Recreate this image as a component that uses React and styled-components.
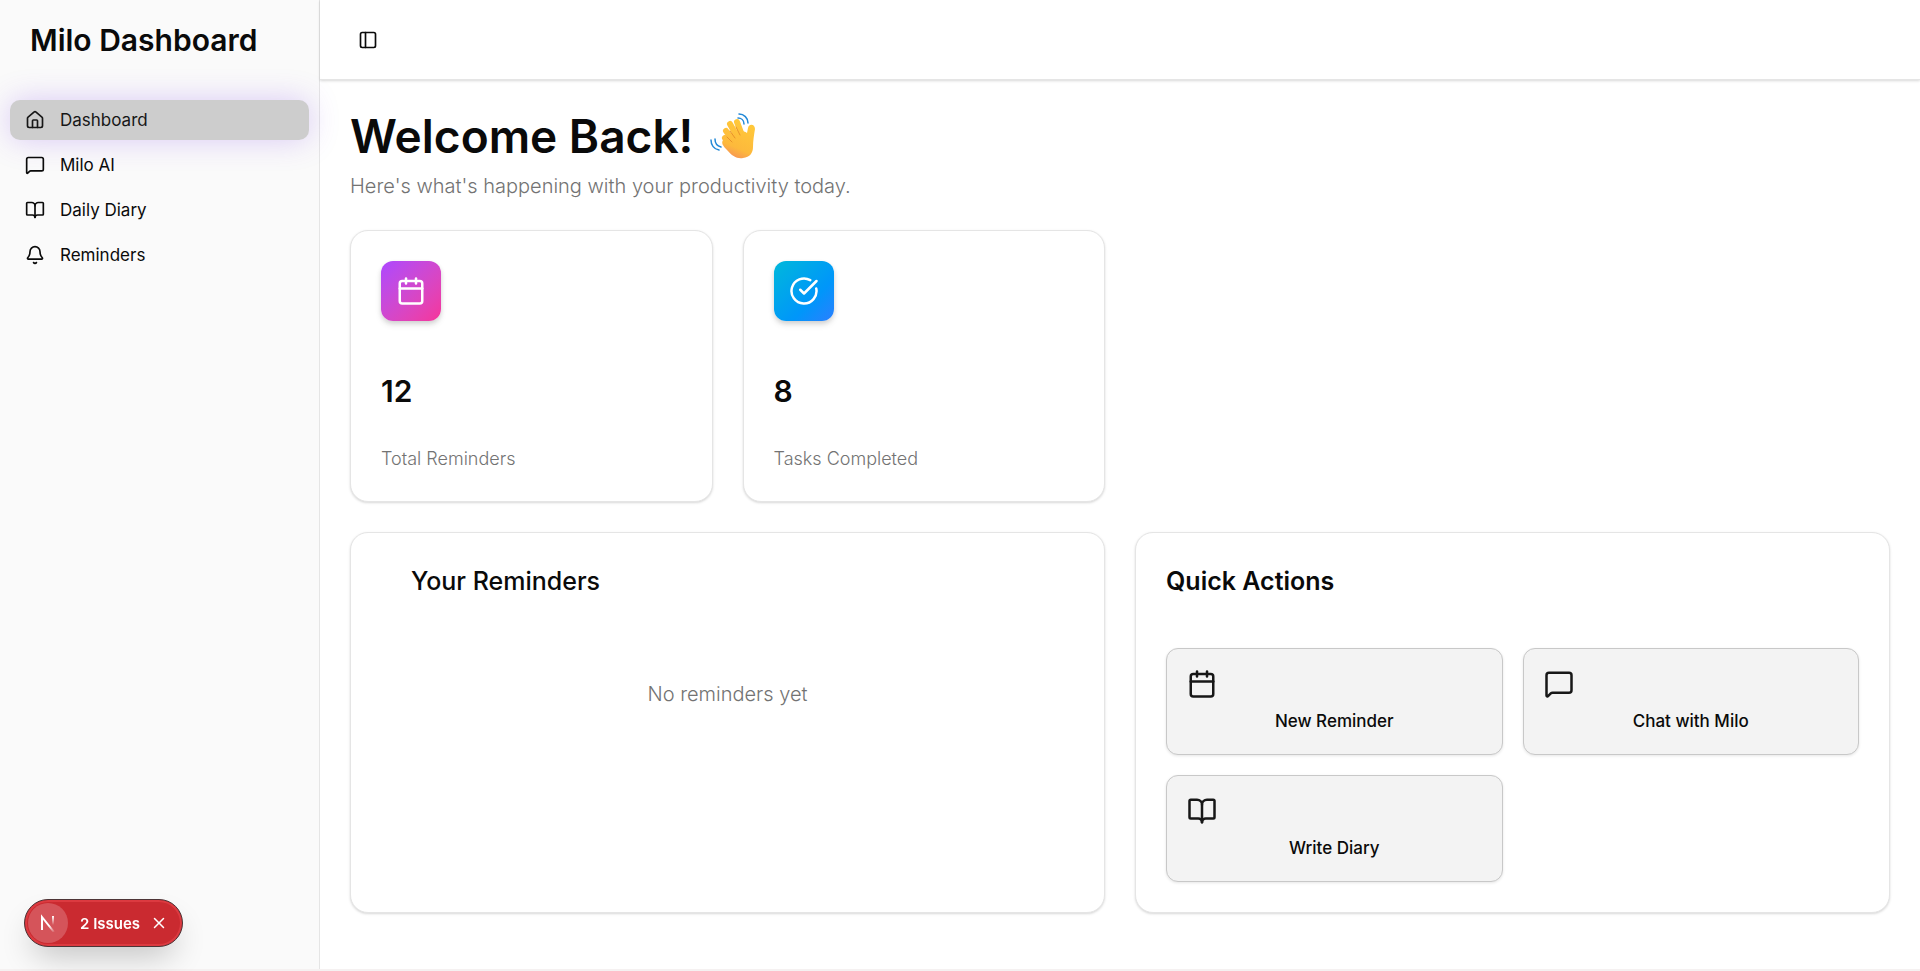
import React from "react";
import styled, { createGlobalStyle } from "styled-components";
import {
  House,
  MessageSquare,
  BookOpen,
  Bell,
  PanelLeft,
  Calendar,
  CircleCheckBig,
  X,
} from "lucide-react";

const GlobalStyle = createGlobalStyle`
  *, *::before, *::after { box-sizing: border-box; }
  body {
    margin: 0;
    background: #ffffff;
    color: #0a0a0a;
    font-family: Inter, "Liberation Sans", sans-serif;
    font-size: 17px;
    line-height: 25px;
  }
  h1, h2, p { margin: 0; }
  button { font: inherit; color: inherit; cursor: pointer; }
`;

const Shell = styled.div`
  display: flex;
  min-height: 100vh;
  border-bottom: 2px solid #f5f1f1;
`;

const Sidebar = styled.aside`
  width: 320px;
  flex-shrink: 0;
  background: #fafafa;
  border-right: 1px solid #e5e5e5;
`;

const Brand = styled.div`
  display: flex;
  align-items: center;
  height: 80px;
  padding: 0 30px;
  font-size: 30px;
  line-height: 40px;
  font-weight: 600;
`;

const Menu = styled.nav`
  display: flex;
  flex-direction: column;
  gap: 5px;
  padding: 20px 10px;
`;

const MenuLink = styled.a`
  display: flex;
  align-items: center;
  gap: 15px;
  height: 40px;
  padding: 0 15px;
  border-radius: 10px;
  color: ${(p) => (p.$active ? "#171717" : "#0a0a0a")};
  background: ${(p) => (p.$active ? "#cdcdcd" : "transparent")};
  box-shadow: ${(p) => (p.$active ? "0 0 30px rgba(124, 58, 237, 0.25)" : "none")};
  text-decoration: none;
`;

const Page = styled.div`
  flex: 1;
  min-width: 0;
`;

const TopBar = styled.header`
  display: flex;
  align-items: center;
  height: 80px;
  padding: 0 30px;
  border-bottom: 1px solid #e5e5e5;
  box-shadow: 0 1px 3px rgba(0, 0, 0, 0.1), 0 1px 2px rgba(0, 0, 0, 0.06);
`;

const IconButton = styled.button`
  display: grid;
  place-items: center;
  width: 36px;
  height: 36px;
  padding: 0;
  border: 0;
  border-radius: 8px;
  background: transparent;
`;

const Content = styled.main`
  display: flex;
  flex-direction: column;
  gap: 30px;
  padding: 30px;
`;

const Title = styled.h1`
  display: flex;
  align-items: center;
  gap: 17px;
  margin-bottom: 10px;
  font-size: 46px;
  line-height: 52px;
  font-weight: 600;
`;

const Subtitle = styled.p`
  font-size: 20px;
  line-height: 28px;
  font-weight: 300;
  color: #737373;
`;

const Grid = styled.div`
  display: grid;
  grid-template-columns: repeat(${(p) => p.$columns}, 1fr);
  gap: ${(p) => p.$gap}px;
`;

const Card = styled.section`
  display: flex;
  flex-direction: column;
  padding: 30px;
  border: 1px solid #e5e5e5;
  border-radius: 18px;
  background: #ffffff;
  box-shadow: 0 1px 3px rgba(0, 0, 0, 0.1), 0 1px 2px rgba(0, 0, 0, 0.06);
`;

const Tile = styled.div`
  display: grid;
  place-items: center;
  width: 60px;
  height: 60px;
  margin-bottom: 50px;
  border-radius: 12px;
  color: #ffffff;
  background: ${(p) => p.$fill};
  box-shadow: 0 4px 6px rgba(0, 0, 0, 0.1), 0 2px 4px rgba(0, 0, 0, 0.1);
`;

const Figure = styled.p`
  margin-bottom: 35px;
  font-size: 30px;
  line-height: 40px;
  font-weight: 600;
`;

const FigureLabel = styled.p`
  font-size: 18px;
  font-weight: 300;
  color: #737373;
`;

const CardTitle = styled.h2`
  padding: 0 ${(p) => (p.$inset ? 30 : 0)}px;
  font-size: 25px;
  line-height: 36px;
  font-weight: ${(p) => (p.$inset ? 500 : 600)};
`;

const Empty = styled.p`
  padding: 80px 0;
  text-align: center;
  font-size: 20px;
  line-height: 30px;
  font-weight: 300;
  color: #737373;
`;

const Actions = styled(Grid)`
  margin-top: 49px;
`;

const Action = styled.button`
  display: flex;
  flex-direction: column;
  gap: 10px;
  padding: 20px;
  border: 1px solid #c8c8c8;
  border-radius: 12px;
  background: #f3f3f3;
  box-shadow: 0 1px 3px rgba(0, 0, 0, 0.1);
`;

const ActionLabel = styled.span`
  align-self: center;
  font-weight: 500;
`;

const Issues = styled.div`
  position: fixed;
  left: 24px;
  bottom: 24px;
  display: flex;
  align-items: center;
  height: 48px;
  padding: 0 14px 0 3px;
  border: 1px solid #4d3436;
  border-radius: 24px;
  background: #ca2a30;
  color: #ffffff;
  font-size: 15px;
  font-weight: 600;
  box-shadow: inset 0 0 0 2px #dc3a40, 0 16px 32px -8px rgba(0, 0, 0, 0.24);
`;

const PlainButton = styled.button`
  display: grid;
  place-items: center;
  padding: 0;
  border: 0;
  background: transparent;
`;

const LogoButton = styled(PlainButton)`
  width: 40px;
  height: 40px;
  margin-right: 12px;
  border-radius: 50%;
  background: #d5545a;
`;

const IssueText = styled(PlainButton)`
  margin-right: 10px;
`;

function WavingHand() {
  return (
    <svg width="46" height="46" viewBox="0 0 46 46" fill="none" aria-hidden="true">
      <defs>
        <linearGradient id="skin" x1="34" y1="10" x2="18" y2="46" gradientUnits="userSpaceOnUse">
          <stop offset="0" stopColor="#ffc83a" />
          <stop offset="0.65" stopColor="#fdb93c" />
          <stop offset="1" stopColor="#f58a5c" />
        </linearGradient>
      </defs>
      <g stroke="url(#skin)" strokeWidth="6" strokeLinecap="round">
        <path d="M16 18 L26 31" />
        <path d="M20 11 L29 27" />
        <path d="M27 9 L33 25" />
        <path d="M15 25 L24 35" />
      </g>
      <path
        d="M13 27 C11 30 13 33 17 37 C22 43 27 46 33 45 C40 44 43 40 43 34 C43 28 44 22 45 16 C45 11 39 10 38 15 L37 20 C32 16 22 19 17 22 Z"
        fill="url(#skin)"
      />
      <path d="M20 18 L25 25 M26 14 L30 22 M17 24 L22 29" stroke="#e8932a" strokeWidth="1" strokeLinecap="round" />
      <g stroke="#2389d7" strokeWidth="1.5" strokeLinecap="round">
        <path d="M29 1 C34 1 38 5 38 10" />
        <path d="M28 5 C31 5 34 7 34 11" />
        <path d="M1 27 C1 32 4 36 9 37" />
        <path d="M5 26 C5 30 7 33 11 34" />
      </g>
    </svg>
  );
}

function NextMark() {
  return (
    <svg width="18" height="18" viewBox="0 0 18 18" fill="none" aria-hidden="true">
      <defs>
        <linearGradient id="fade" x1="11" y1="11" x2="16" y2="17" gradientUnits="userSpaceOnUse">
          <stop stopColor="#fff" />
          <stop offset="1" stopColor="#fff" stopOpacity="0.1" />
        </linearGradient>
        <linearGradient id="fall" x1="14" y1="2" x2="14" y2="11" gradientUnits="userSpaceOnUse">
          <stop stopColor="#fff" />
          <stop offset="1" stopColor="#fff" stopOpacity="0" />
        </linearGradient>
      </defs>
      <path d="M3 16 V3 L15 18" stroke="url(#fade)" strokeWidth="2" />
      <path d="M14 2 V11" stroke="url(#fall)" strokeWidth="2" />
    </svg>
  );
}

const menu = [
  { label: "Dashboard", Icon: House, active: true },
  { label: "Milo AI", Icon: MessageSquare },
  { label: "Daily Diary", Icon: BookOpen },
  { label: "Reminders", Icon: Bell },
];

const stats = [
  {
    label: "Total Reminders",
    value: 12,
    Icon: Calendar,
    fill: "linear-gradient(135deg in oklab, #ad46ff, #f6339a)",
  },
  {
    label: "Tasks Completed",
    value: 8,
    Icon: CircleCheckBig,
    fill: "linear-gradient(135deg, #00b8db, #0096fa 65%, #2b7fff)",
  },
];

const actions = [
  { label: "New Reminder", Icon: Calendar },
  { label: "Chat with Milo", Icon: MessageSquare },
  { label: "Write Diary", Icon: BookOpen },
];

export default function App() {
  return (
    <>
      <GlobalStyle />
      <Shell>
        <Sidebar>
          <Brand>Milo Dashboard</Brand>
          <Menu aria-label="Main">
            {menu.map(({ label, Icon, active }) => (
              <MenuLink key={label} href="#" $active={active}>
                <Icon size={20} />
                {label}
              </MenuLink>
            ))}
          </Menu>
        </Sidebar>
        <Page>
          <TopBar>
            <IconButton aria-label="Toggle sidebar">
              <PanelLeft size={20} />
            </IconButton>
          </TopBar>
          <Content>
            <div>
              <Title>
                Welcome Back! <WavingHand />
              </Title>
              <Subtitle>Here's what's happening with your productivity today.</Subtitle>
            </div>
            <Grid $columns={4} $gap={30}>
              {stats.map(({ label, value, Icon, fill }) => (
                <Card key={label}>
                  <Tile $fill={fill}>
                    <Icon size={30} />
                  </Tile>
                  <Figure>{value}</Figure>
                  <FigureLabel>{label}</FigureLabel>
                </Card>
              ))}
            </Grid>
            <Grid $columns={2} $gap={30}>
              <Card>
                <CardTitle $inset>Your Reminders</CardTitle>
                <Empty>No reminders yet</Empty>
              </Card>
              <Card>
                <CardTitle>Quick Actions</CardTitle>
                <Actions $columns={2} $gap={20}>
                  {actions.map(({ label, Icon }) => (
                    <Action key={label}>
                      <Icon size={30} color="#171717" />
                      <ActionLabel>{label}</ActionLabel>
                    </Action>
                  ))}
                </Actions>
              </Card>
            </Grid>
          </Content>
        </Page>
      </Shell>
      <Issues>
        <LogoButton aria-label="Open developer tools">
          <NextMark />
        </LogoButton>
        <IssueText>2 Issues</IssueText>
        <PlainButton aria-label="Dismiss">
          <X size={18} strokeWidth={2} />
        </PlainButton>
      </Issues>
    </>
  );
}
